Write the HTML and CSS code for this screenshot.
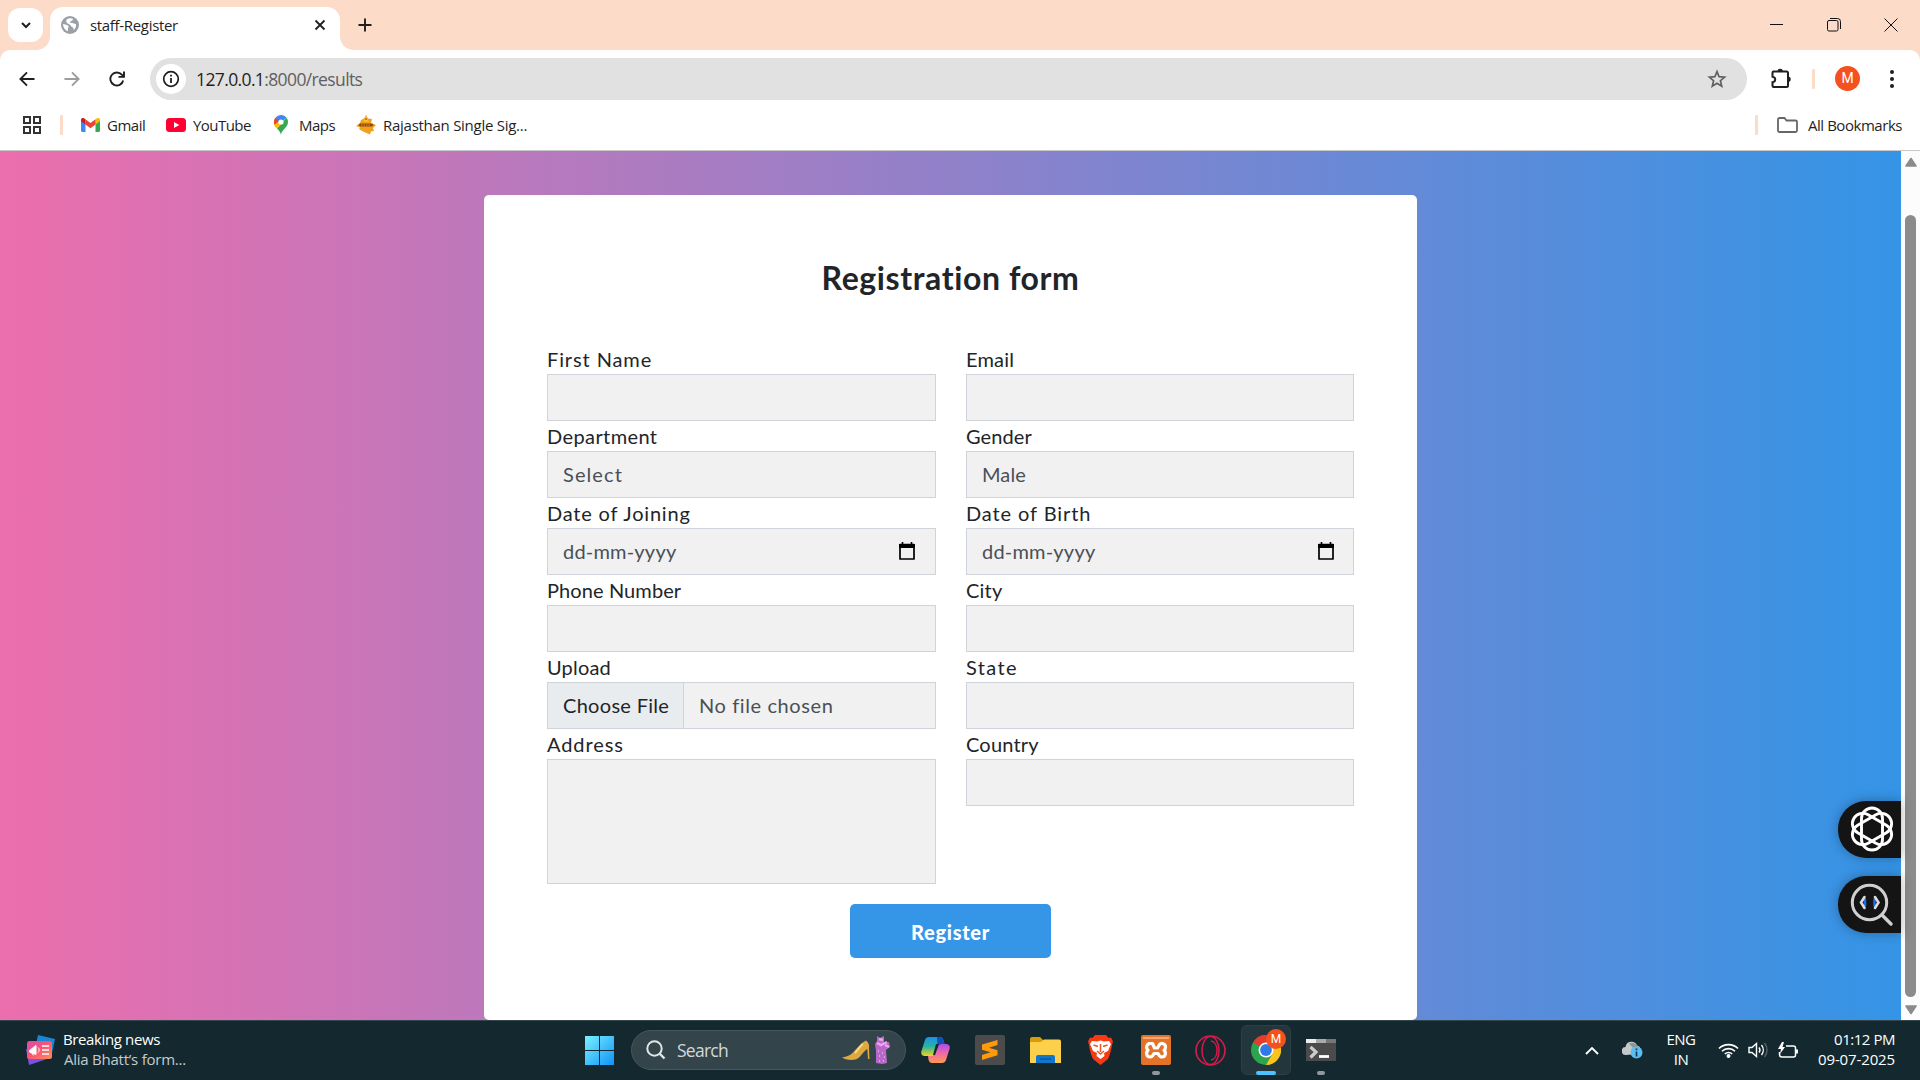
FILE: index.html
```html
<!DOCTYPE html>
<html lang="en">
<head>
<meta charset="utf-8">
<title>staff-Register</title>
<link rel="stylesheet" href="styles.css">
</head>
<body>
<header class="browser">
  <div class="tabstrip">
    <div class="tab-search"><svg width="12" height="8" viewBox="0 0 12 8"><path d="M2 2l4 4 4-4" fill="none" stroke="#1f1f1f" stroke-width="2"/></svg></div>
    <div class="tab">
      <svg class="globe" width="18" height="18" viewBox="0 0 18 18"><circle cx="9" cy="9" r="9" fill="#9aa0a6"/><path d="M2 8c2 .2 3 1 4.500 1.300 1.500.4 1.200 2 .6 2.800-.5.900.3 1.600-.1 3.200C4 14.300 2 11.500 2 8zM5.500 3.500C7.500 2.200 11 2 12 3c.2 1.500-1.800 1.500-2.600 2.500-.7 1 .6 1.700 1.800 1.600 1.500-.1 2.200 1 3.800.8.600 2.500-.8 5-2.400 6 .1-1.500-.2-2.500-1.500-2.900-1.500-.5-1.200-2-2.500-2.600C6.500 7.500 4.500 6.500 5.500 3.500z" fill="#fff"/></svg>
      <span class="tab-title">staff-Register</span>
      <svg width="12" height="12" viewBox="0 0 12 12"><path d="M1.500 1.500l9 9M10.500 1.500l-9 9" stroke="#1f1f1f" stroke-width="1.800"/></svg>
    </div>
    <svg class="new-tab" width="14" height="14" viewBox="0 0 14 14"><path d="M7 .5v13M.5 7h13" stroke="#1f1f1f" stroke-width="1.900"/></svg>
    <div class="window-buttons">
      <svg width="14" height="14" viewBox="0 0 14 14"><path d="M0 6.500h13" stroke="#111" stroke-width="1"/></svg>
      <svg width="14" height="14" viewBox="0 0 14 14" fill="none" stroke="#111"><rect x=".5" y="2.500" width="10.500" height="10.500" rx="1.500"/><path d="M3 .5h7.500a3 3 0 0 1 3 3V11"/></svg>
      <svg width="14" height="14" viewBox="0 0 14 14"><path d="M.5.500l13 13M13.500.500l-13 13" stroke="#111" stroke-width="1"/></svg>
    </div>
  </div>

  <div class="toolbar">
    <div class="nav">
      <svg width="16" height="16" viewBox="0 0 16 16" fill="none" stroke="#1f1f1f" stroke-width="1.900"><path d="M15.500 8H1.500M8 1.300L1.400 8 8 14.700"/></svg>
      <svg width="16" height="16" viewBox="0 0 16 16" fill="none" stroke="#9c9c9c" stroke-width="1.900"><path d="M.5 8h14M8 1.300L14.600 8 8 14.700"/></svg>
      <svg width="16" height="16" viewBox="0 0 16 16" fill="none" stroke="#1f1f1f" stroke-width="1.900"><path d="M14.200 9.500a6.500 6.500 0 1 1-1.400-5.800L14.600 5.500M15 .5v5.400H9.500"/></svg>
    </div>
    <div class="omnibox">
      <span class="site-info"><svg width="18" height="18" viewBox="0 0 18 18"><circle cx="9" cy="9" r="7.300" fill="none" stroke="#1f1f1f" stroke-width="1.700"/><path d="M9 8v5M9 4.800v1.800" stroke="#1f1f1f" stroke-width="1.800"/></svg></span>
      <span class="url">127.0.0.1<span class="url-path">:8000/results</span></span>
      <svg width="20" height="20" viewBox="0 0 20 20"><path d="M10 2.600l2.100 5.100 5.500.4-4.200 3.600 1.300 5.400L10 14.200l-4.700 2.900 1.300-5.400-4.200-3.600 5.500-.4z" fill="none" stroke="#5f6060" stroke-width="1.700"/></svg>
    </div>
    <div class="tools">
      <svg width="22" height="22" viewBox="0 0 22 22"><path d="M3.500 3.500h13a1.500 1.500 0 0 1 1.500 1.500v12.500a1.500 1.500 0 0 1-1.500 1.500h-13a1.500 1.500 0 0 1-1-1.500v-3.300c3.600-.5 3.600-5 0-5.500V5a1.500 1.500 0 0 1 1-1.500z" fill="none" stroke="#1f1f1f" stroke-width="2"/><path d="M7.500 3.500a2.700 2.700 0 0 1 5.400 0zM18 8.500a2.700 2.700 0 0 1 0 5.400z" fill="#1f1f1f"/></svg>
      <i class="divider"></i>
      <span class="avatar">M</span>
      <svg width="6" height="20" viewBox="0 0 6 20" fill="#1f1f1f"><circle cx="3" cy="3" r="2"/><circle cx="3" cy="10" r="2"/><circle cx="3" cy="17" r="2"/></svg>
    </div>
  </div>

  <div class="bookmarks">
    <svg class="apps" width="18" height="18" viewBox="0 0 18 18" fill="none" stroke="#333" stroke-width="2"><path d="M1 1h6v6H1zM11 1h6v6h-6zM1 11h6v6H1zM11 11h6v6h-6z"/></svg>
    <i class="divider"></i>
    <div class="bookmark gmail"><svg width="19" height="14" viewBox="0 0 19 14"><path d="M0 2v10.500A1.500 1.500 0 0 0 1.500 14h3V5z" fill="#4285f4"/><path d="M19 2v10.500a1.500 1.500 0 0 1-1.500 1.500h-3V5z" fill="#34a853"/><path d="M14.500 1.300V6.600L19 3.200V2c0-2-2-2.500-3.300-1.500z" fill="#fbbc04"/><path d="M4.500 1.300v5.300l5 3.700 5-3.700V1.300l-5 3.700z" fill="#ea4335"/><path d="M0 2v1.200l4.500 3.400V1.300L3.300.5C2-.5 0 0 0 2z" fill="#c5221f"/></svg><span>Gmail</span></div>
    <div class="bookmark youtube"><svg width="20" height="14" viewBox="0 0 20 14"><rect width="20" height="14" rx="3.500" fill="#f03"/><path d="M8 4v6l5.300-3z" fill="#fff"/></svg><span>YouTube</span></div>
    <div class="bookmark maps"><svg width="14" height="20" viewBox="0 0 14 20"><path d="M7 20c0-5 7-7.500 7-13A7 7 0 0 0 12.500 2.700L3 13.500C5 15.800 6.500 17 7 20z" fill="#34a853"/><path d="M1.300 3A7 7 0 0 0 3 13.500L9 7z" fill="#fbbc04"/><path d="M1.500 2.700A7 7 0 0 0 .5 9.500L7 5z" fill="#ea4335"/><path d="M1.600 2.600a7 7 0 0 1 10.900 0L6.500 9z" fill="#4285f4"/><circle cx="7" cy="7" r="2.600" fill="#fff"/></svg><span>Maps</span></div>
    <div class="bookmark rajasthan"><svg width="20" height="20" viewBox="0 0 20 20"><path d="M5 5l3-1.500L10 0l2 3.500L16 4l-1 4 5 2-3 3 1 3-3 .5-1 3-3.500-1.500L6 16l-3-2 1-1.500L0 11l4-3z" fill="#f3a01f"/><path d="M10 .5l2.500 6h-5z" fill="#f8c62c"/><path d="M4 8.500h12l1.500 1.500-1.500 1.500H4L2.500 10z" fill="#8a4d16"/><path d="M5 10h10" stroke="#f3a01f" stroke-width=".8" stroke-dasharray="1.500 1"/><path d="M10 3v2" stroke="#7a4316"/></svg><span>Rajasthan Single Sig...</span></div>
    <div class="all-bookmarks"><i class="divider"></i><svg width="21" height="16" viewBox="0 0 21 16"><path d="M1 2.500A1.500 1.500 0 0 1 2.500 1h5l2 2.500h9A1.500 1.500 0 0 1 20 5v8.500a1.500 1.500 0 0 1-1.500 1.500h-16A1.500 1.500 0 0 1 1 13.500z" fill="none" stroke="#666" stroke-width="1.800"/></svg><span>All Bookmarks</span></div>
  </div>
</header>

<div class="viewport">
  <main class="page">
    <form class="card">
      <h1>Registration form</h1>
      <div class="columns">
        <div class="column">
          <label class="sp-9">First Name</label><div class="field"></div>
          <label class="sp-4">Department</label><div class="field"><span class="sp-11">Select</span></div>
          <label class="sp-8">Date of Joining</label><div class="field"><span class="sp-2">dd-mm-yyyy</span><svg width="16" height="18" viewBox="0 0 16 18"><path d="M3.500 0v3M12.500 0v3" stroke="#000" stroke-width="1.600"/><path d="M1 2.500h14v14.500H1z" fill="none" stroke="#000" stroke-width="1.700" stroke-linejoin="round"/><path d="M0 2h16v4H0z"/></svg></div>
          <label class="sp-1">Phone Number</label><div class="field"></div>
          <label class="sp-2">Upload</label><div class="field file"><span class="choose sp-3">Choose File</span><span class="sp-6">No file chosen</span></div>
          <label class="sp-9">Address</label><div class="field area"></div>
        </div>
        <div class="column">
          <label class="sp-2">Email</label><div class="field"></div>
          <label class="sp-1">Gender</label><div class="field"><span class="sp-1">Male</span></div>
          <label class="sp-9">Date of Birth</label><div class="field"><span class="sp-2">dd-mm-yyyy</span><svg width="16" height="18" viewBox="0 0 16 18"><path d="M3.500 0v3M12.500 0v3" stroke="#000" stroke-width="1.600"/><path d="M1 2.500h14v14.500H1z" fill="none" stroke="#000" stroke-width="1.700" stroke-linejoin="round"/><path d="M0 2h16v4H0z"/></svg></div>
          <label class="sp-2">City</label><div class="field"></div>
          <label class="sp-14">State</label><div class="field"></div>
          <label class="sp-2">Country</label><div class="field"></div>
        </div>
      </div>
      <button type="button" class="register">Register</button>
    </form>
    <div class="extension extension-flower"><svg width="46" height="46" viewBox="-23 -23 46 46" fill="none" stroke="#fff" stroke-width="2.900"><rect x="-10.500" y="-21" width="21" height="42" rx="10.500"/><rect x="-10.500" y="-21" width="21" height="42" rx="10.500" transform="rotate(60)"/><rect x="-10.500" y="-21" width="21" height="42" rx="10.500" transform="rotate(120)"/></svg></div>
    <div class="extension extension-inspect"><svg width="46" height="46" viewBox="0 0 46 46" fill="none" stroke-linecap="round"><circle cx="20.500" cy="20.500" r="17.200" stroke="#d0d0d0" stroke-width="3"/><path d="M33 33l9 9" stroke="#d0d0d0" stroke-width="3.400"/><path d="M16 17.500v6M25.500 17.500v6" stroke="#1a6cf5" stroke-width="2.500"/><path d="M15.500 15l-3.500 5.500 3.500 5.500M26 15l3.500 5.500L26 26" stroke="#dcdcdc" stroke-width="2.600"/></svg></div>
  </main>
  <div class="scrollbar">
    <svg width="12" height="10" viewBox="0 0 12 10"><path d="M6 1.500L11 9H1z" fill="#8b8b8b" stroke="#8b8b8b" stroke-width="1.600" stroke-linejoin="round"/></svg>
    <div class="thumb"></div>
    <svg width="12" height="10" viewBox="0 0 12 10"><path d="M6 8.500L11 1H1z" fill="#8b8b8b" stroke="#8b8b8b" stroke-width="1.600" stroke-linejoin="round"/></svg>
  </div>
</div>

<footer class="taskbar">
  <div class="news">
    <svg width="30" height="30" viewBox="0 0 30 30"><defs><linearGradient id="news" x2="1" y2="1"><stop stop-color="#d94bb0"/><stop offset=".5" stop-color="#fb5573"/><stop offset="1" stop-color="#ff9058"/></linearGradient></defs><path d="M13 0l17 4-3 14-17-4z" fill="#1a86d8"/><path d="M1 14l3 16 18-6z" fill="#7c50e8"/><rect x="2" y="6" width="25" height="18" rx="2.500" fill="url(#news)"/><path d="M4.500 15.500L11 10.500v9l-6.500-2.500zM6.500 17.500l2 3" fill="#fff" stroke="#fff"/><path d="M13 12.500c1.500 1 1.500 4 0 5" fill="none" stroke="#fff"/><path d="M17 11h7M17 15h7M17 19h7" stroke="#ffd9dc" stroke-width="1.800"/></svg>
    <div class="news-text"><span class="headline">Breaking news</span><span class="story">Alia Bhatt’s form...</span></div>
  </div>

  <div class="apps-row">
    <svg class="start" width="29" height="29" viewBox="0 0 29 29"><defs><linearGradient id="win" x2="1" y2="1"><stop stop-color="#79f0ff"/><stop offset="1" stop-color="#1093f8"/></linearGradient></defs><path d="M0 0h14v14H0zM15 0h14v14H15zM0 15h14v14H0zM15 15h14v14H15z" fill="url(#win)"/></svg>
    <div class="search">
      <svg width="20" height="20" viewBox="0 0 20 20" fill="none" stroke="#e2e6e7" stroke-width="2"><circle cx="8.500" cy="8.500" r="7.200"/><path d="M13.500 13.500l5 5" stroke-width="2.400"/></svg>
      <span>Search</span>
      <svg class="fashion" width="50" height="30" viewBox="0 0 50 30"><path d="M1 22.500c5-1 8-2 11-5 4-4 7-9 13-12 2.500 2 3.500 4 3 7.500L28.500 24h-1.500l-.7-10c-4 2-6 8-11 10.300-5 1.400-11 .7-14.300-1.800z" fill="#dfa93f"/><path d="M14 18c3-3 5-7 8-9" stroke="#f8dc94" stroke-width="1.800" fill="none"/><path d="M36 1l3 2 4-2v7l5-1 1 5-4 3 1 13-5 1-6-1 0-12-1-7 2-3z" fill="#b768c9"/><path d="M36 8l4 2 6-3M38 4l4 1M44 10l4 2" stroke="#efa4ef" stroke-width="2.500" fill="none"/><path d="M37 16h1M41 18h1M38 21h1M43 22h1M38 26h1M42 26h1" stroke="#e3b5f3" stroke-width="1.500"/></svg>
    </div>
    <svg class="copilot" width="29" height="26" viewBox="0 0 29 26"><defs><linearGradient id="cpa" x2="0" y2="1"><stop stop-color="#1b8ff0"/><stop offset=".5" stop-color="#28b4a0"/><stop offset="1" stop-color="#f3d51c"/></linearGradient><linearGradient id="cpb" x2="0" y2="1"><stop stop-color="#a74df0"/><stop offset=".5" stop-color="#f26aa5"/><stop offset="1" stop-color="#ff9a4a"/></linearGradient></defs><path d="M8 0h11c2 0 3 1.500 3.500 3.500l1 3.500h-4c-2 0-3 1-3.500 3l-2 7c-.5 1.500-1.500 2-3 2H4c-3 0-4.500-2-3.500-5L4 3c.6-2 2-3 4-3z" fill="url(#cpa)"/><path d="M16 0h3c2 0 3 1.500 3.500 3.500l1 3.500h-4c-1.500 0-2.500.5-3 1.500z" fill="#1550b8"/><path d="M21 7h4c3 0 4.500 2 3.500 5l-3.500 11c-.6 2-2 3-4 3H11c-2 0-3-1.500-3.500-3.500L7 19h4c1.500 0 2.500-.5 3-2l2.500-7c.6-2 2-3 4.500-3z" fill="url(#cpb)"/><path d="M15 7h3l-4 11h-2z" fill="#14292f"/></svg>
    <svg class="sublime" width="30" height="30" viewBox="0 0 30 30"><rect width="30" height="30" rx="2" fill="#4b4b4b"/><path d="M7 9.500L22.500 5v5L14 12.700l8.500 2.600v5L7 25v-5l8.500-2.700L7 14.700z" fill="#ff9a0a"/></svg>
    <svg class="folder" width="31" height="26" viewBox="0 0 31 26"><path d="M0 2a2 2 0 0 1 2-2h8l4 4v4H0z" fill="#dd9a07"/><path d="M0 5h11l3-2.500h15a2 2 0 0 1 2 2V26H0z" fill="#fdd04b"/><path d="M6 26v-6a2 2 0 0 1 2-2h15a2 2 0 0 1 2 2v6z" fill="#1077cc"/><path d="M10 22h11" stroke="#0a4f96" stroke-width="1.200"/></svg>
    <svg class="brave" width="25" height="30" viewBox="0 0 25 30"><path d="M7 0h11l2.500 3 2.500-.5 2 4-1 3.500c-1 7-3 12-4 14l-7.500 6L5 24C4 22 2 17 1 10L0 6.500l2-4 2.500.5z" fill="#f63a14"/><path d="M4 6l5 .5 3.500-1 3.500 1 5-.5 2 3-3 7-4 2 .5 3-4 3-4-3 .5-3-4-2-3-7z" fill="#fff"/><path d="M5.500 10l4.500 1.500M19.500 10L15 11.500M12.500 9v8M9 16l3.500 3 3.500-3" stroke="#f4501e" stroke-width="1.500" fill="none"/></svg>
    <div class="app xampp open"><svg width="30" height="30" viewBox="0 0 30 30"><rect width="30" height="30" rx="2" fill="#e37328"/><path d="M2 2h26v2H2z" fill="#f4a775"/><path d="M8 8.500h3.500l2 4.500h3l2-3.500c2-2 6-1 6 2.500 0 1.500-.5 2.500-1.500 3.200 2.500 2 1.500 6.800-2 6.800-2.500 0-3-2-4-3.500h-4c-1 2-2 3.500-4 3.500-3.500 0-4.500-4.500-2-6.800-2-1.500-2-5 1-6.700z" fill="none" stroke="#fff" stroke-width="3.200" stroke-linejoin="round"/></svg></div>
    <svg class="opera" width="31" height="31" viewBox="0 0 31 31" fill="none" stroke="#d31b4a"><circle cx="15.500" cy="15.500" r="14.500" stroke-width="1.700"/><ellipse cx="15.500" cy="15.500" rx="8.500" ry="14" stroke-width="1.500"/><path d="M16 6c8 1 8 18 0 19" stroke-width="1.500"/></svg>
    <div class="app chrome active">
      <svg width="30" height="30" viewBox="0 0 30 30"><circle cx="15" cy="15" r="15" fill="#2da44e"/><path d="M15 15L2 7.500A15 15 0 0 1 28 7.500H15z" fill="#e33b2e"/><path d="M28 7.500A15 15 0 0 1 15 30l6.500-11.300L15 7.500z" fill="#fcc31e"/><circle cx="15" cy="15" r="7.500" fill="#fff"/><circle cx="15" cy="15" r="5.900" fill="#3279e8"/></svg>
      <span class="badge">M</span>
    </div>
    <div class="app terminal open"><svg width="30" height="22" viewBox="0 0 30 22"><path d="M0 0h30v22H0z" fill="#4b4b4b"/><path d="M0 0h10v4H0z" fill="#ededed"/><path d="M10 0h10v4H10z" fill="#aaa"/><path d="M20 0h10v4H20z" fill="#777"/><path d="M4.500 8l5.500 5-5.500 5.500" fill="none" stroke="#ccc" stroke-width="3.200"/><path d="M13 17.500h10" stroke="#fff" stroke-width="2.800"/></svg></div>
  </div>

  <div class="tray">
    <svg width="14" height="9" viewBox="0 0 14 9"><path d="M1 8l6-6 6 6" fill="none" stroke="#fff" stroke-width="1.900"/></svg>
    <svg class="cloud" width="21" height="18" viewBox="0 0 21 18"><path d="M4 14a4 4 0 0 1-.5-8A6 6 0 0 1 15 4.500 4.500 4.500 0 0 1 16 13z" fill="#c4c8c9"/><path d="M7 2.500A6 6 0 0 1 15 4.500a4.500 4.500 0 0 1 1 8z" fill="#8d9597"/><circle cx="14.500" cy="11.500" r="6" fill="#5bbcf2"/><path d="M14.500 10.500v5M14.500 7.500v1.800" stroke="#10384b" stroke-width="1.600"/></svg>
    <div class="language"><span>ENG</span><span>IN</span></div>
    <svg class="wifi" width="21" height="16" viewBox="0 0 21 16" fill="none" stroke="#fff" stroke-width="1.600"><path d="M1 6.500a13.500 13.500 0 0 1 19 0M4 9.300a9.300 9.300 0 0 1 13 0M6.800 12a5.300 5.300 0 0 1 7.400 0"/><circle cx="10.500" cy="14" r="1.200" fill="#fff"/></svg>
    <svg class="sound" width="20" height="16" viewBox="0 0 20 16" fill="none" stroke="#fff" stroke-width="1.400"><path d="M1 5.500h3L8.500 1.500v13L4 10.500H1z"/><path d="M11 5.500a4 4 0 0 1 0 5M13.500 3a8 8 0 0 1 0 10"/><path d="M16.500 1a11 11 0 0 1 0 14" stroke="#546266"/></svg>
    <svg class="battery" width="21" height="17" viewBox="0 0 21 17"><path d="M8 4h7.500A2 2 0 0 1 17.500 6v7a2 2 0 0 1-2 2H4a2.500 2.500 0 0 1-2.500-2.500V10" fill="none" stroke="#fff" stroke-width="1.500"/><path d="M19 7.500v4" stroke="#fff" stroke-width="2"/><path d="M4 0L0 7h3l-1 5 5-7H4.500L6 0z" fill="#fff"/></svg>
    <div class="clock"><span class="time">01:12 PM</span><span class="date">09-07-2025</span></div>
  </div>
</footer>
</body>
</html>
```
FILE: styles.css
```css
* { box-sizing: border-box; }

body {
  margin: 0;
  width: 1920px;
  height: 1080px;
  overflow: hidden;
  display: flex;
  flex-direction: column;
  background: #fddbc9;
  font-family: "Segoe UI", "Open Sans", sans-serif;
  font-size: 15px;
  color: #1f1f1f;
}

svg { display: block; flex: none; }
span { white-space: nowrap; }

/* Browser frame */
.tabstrip {
  height: 50px;
  display: flex;
  align-items: center;
  padding-left: 8px;
}
.tab-search {
  width: 35px;
  height: 34px;
  border-radius: 12px;
  background: #fff;
  display: flex;
  align-items: center;
  justify-content: center;
}
.tab {
  position: relative;
  align-self: flex-end;
  width: 290px;
  height: 43px;
  margin-left: 7px;
  padding: 0 14px 7px 11px;
  border-radius: 13px 13px 0 0;
  background: #fff;
  display: flex;
  align-items: center;
}
.tab::before,
.tab::after {
  content: "";
  position: absolute;
  bottom: 0;
  width: 13px;
  height: 13px;
}
.tab::before { left: -13px; background: radial-gradient(circle at 0 0, transparent 12.5px, #fff 13px); }
.tab::after { right: -13px; background: radial-gradient(circle at 100% 0, transparent 12.5px, #fff 13px); }
.tab-title { margin-left: 11px; padding-bottom: 1px; flex: 1; letter-spacing: -.32px; }
.new-tab { margin-left: 18px; }
.window-buttons { margin-left: auto; margin-right: 22px; padding-bottom: 1px; display: flex; gap: 43px; }

.toolbar {
  height: 58px;
  padding: 0 25px 1px 19px;
  background: #fff;
  border-radius: 10px 10px 0 0;
  display: flex;
  align-items: center;
}
.nav { display: flex; gap: 29px; }
.omnibox {
  width: 1597px;
  height: 42px;
  margin: 1px 0 0 25px;
  padding: 0 20px 0 6px;
  border-radius: 21px;
  background: #e1e1e1;
  display: flex;
  align-items: center;
}
.site-info {
  width: 30px;
  height: 30px;
  border-radius: 50%;
  background: #fff;
  display: flex;
  align-items: center;
  justify-content: center;
}
.url { flex: 1; margin-left: 10px; font-size: 17.5px; letter-spacing: -.62px; }
.url-path { color: #5f6060; }
.tools { margin-left: auto; display: flex; align-items: center; }
.divider { display: block; width: 3px; height: 20px; border-radius: 1px; background: #fddbc9; }
.tools .divider { margin-left: 20px; }
.avatar {
  width: 25px;
  height: 25px;
  margin: 0 29px 0 20px;
  border-radius: 50%;
  background: #f4511e;
  color: #fff;
  font: 14px/25px Roboto, sans-serif;
  text-align: center;
}

.bookmarks {
  height: 43px;
  padding: 0 18px 8px 23px;
  background: #fff;
  border-bottom: 1px solid #c8c8c8;
  display: flex;
  align-items: center;
}
.bookmarks span { padding-bottom: 1px; }
.apps + .divider { margin: 0 18px 0 19px; }
.bookmark { display: flex; align-items: center; gap: 7px; margin-right: 20px; letter-spacing: -.5px; }
.gmail { width: 65px; }
.youtube { width: 88px; margin-right: 20px; letter-spacing: -.55px; }
.maps { width: 62px; gap: 11px; }
.rajasthan { letter-spacing: -.27px; }
.all-bookmarks { margin-left: auto; display: flex; align-items: center; letter-spacing: -.46px; }
.all-bookmarks svg { margin: 0 10px 0 19px; }

/* Page */
.viewport { height: 869px; display: flex; }
.page {
  position: relative;
  width: 1901px;
  background: linear-gradient(to right, #ec6ead, #3494e6);
  display: flex;
  justify-content: center;
  align-items: flex-end;
}
.card {
  width: 933px;
  height: 825px;
  padding: 63px 63px 0;
  border-radius: 5px;
  background: #fff;
  color: #212529;
  font-family: "Comic Sans MS", Lato, sans-serif;
  font-size: 20px;
  display: flex;
  flex-direction: column;
}
h1 {
  margin: 0;
  height: 86px;
  font-size: 32px;
  line-height: 40px;
  letter-spacing: .6px;
  text-align: center;
}
.columns { display: grid; grid-template-columns: 389px 388px; gap: 30px; }
.column { display: flex; flex-direction: column; }
label { height: 30px; line-height: 30px; white-space: nowrap; }
.field {
  height: 47px;
  padding: 0 20px 0 15px;
  border: 1px solid #ced4da;
  background: #f1f1f1;
  color: #495057;
  display: flex;
  align-items: center;
  justify-content: space-between;
}
.field span { padding-bottom: 1px; }
.column + .column .field { padding-right: 19px; }
.field svg { margin-bottom: 2px; }
.area { height: 125px; }
.file { padding-left: 0; justify-content: flex-start; gap: 15px; }
.field .choose {
  width: 136px;
  height: 45px;
  padding: 0 0 0 15px;
  line-height: 44px;
  border-right: 1px solid #ced4da;
  background: #e9ecef;
  color: #212529;
}
.register {
  width: 201px;
  height: 54px;
  margin: 20px auto 0;
  padding: 2px 0 0;
  border: 0;
  border-radius: 5px;
  background: #3595e7;
  color: #fff;
  font: 900 20px "Comic Sans MS", Lato, sans-serif;
  letter-spacing: .7px;
}

/* Letter spacing steps, in tenths of a pixel */
.sp-1 { letter-spacing: .1px; }
.sp-2 { letter-spacing: .2px; }
.sp-3 { letter-spacing: .3px; }
.sp-4 { letter-spacing: .4px; }
.sp-6 { letter-spacing: .6px; }
.sp-8 { letter-spacing: .8px; }
.sp-9 { letter-spacing: .9px; }
.sp-11 { letter-spacing: 1.1px; }
.sp-14 { letter-spacing: 1.4px; }

.extension {
  position: absolute;
  right: 0;
  width: 63px;
  height: 57px;
  padding: 5px 0 0 11px;
  border-radius: 28px 0 0 28px;
  background: #141414;
  box-shadow: 0 0 12px rgba(0, 0, 0, .3);
}
.extension-flower { top: 650px; }
.extension-inspect { top: 725px; padding-top: 6px; }

.scrollbar {
  width: 19px;
  padding: 6px 0 5px 4px;
  background: #fcfcfc;
  display: flex;
  flex-direction: column;
}
.thumb { width: 11px; height: 782px; margin: 48px 0 8px; border-radius: 6px; background: #8b8b8b; }

/* Taskbar */
.taskbar {
  height: 60px;
  padding-bottom: 1px;
  border-top: 1px solid #34464b;
  background: #14292f;
  color: #fff;
  display: flex;
  align-items: center;
  line-height: 20px;
}
.news { width: 585px; padding-left: 25px; display: flex; align-items: center; gap: 8px; }
.news-text { display: flex; flex-direction: column; padding-bottom: 2px; }
.headline { letter-spacing: -.38px; }
.story { color: #c5cbcd; letter-spacing: -.24px; padding-left: 1px; }
.apps-row { display: flex; align-items: center; height: 100%; }
.search {
  width: 275px;
  height: 40px;
  margin-left: 17px;
  padding: 0 14px 0 14px;
  border: 1px solid #46575c;
  border-radius: 20px;
  background: #33454b;
  color: #d3d8da;
  font-size: 17.5px;
  letter-spacing: -.74px;
  display: flex;
  align-items: center;
  gap: 11px;
}
.fashion { margin-left: auto; }
.copilot { margin-left: 15px; }
.sublime { margin-left: 25px; }
.folder { margin-left: 25px; }
.brave { margin-left: 27px; }
.app {
  position: relative;
  width: 50px;
  height: 50px;
  border-radius: 6px;
  display: flex;
  align-items: center;
  justify-content: center;
}
.app::after {
  content: "";
  position: absolute;
  bottom: 0;
  left: 21px;
  width: 8px;
  height: 4px;
  border-radius: 2px;
  background: #91999c;
}
.xampp { margin-left: 18px; }
.opera { margin-left: 14px; }
.chrome { margin-left: 15px; border: 1px solid #2d4046; background: #23363c; }
.active::after { left: 14px; bottom: -1px; width: 20px; background: #4cc2ff; }
.badge {
  position: absolute;
  top: 3px;
  right: 4px;
  width: 20px;
  height: 20px;
  border-radius: 50%;
  background: #f4511e;
  color: #fff;
  font: 12px/20px Roboto, sans-serif;
  text-align: center;
}
.terminal { margin-left: 5px; }
.tray { margin-left: auto; margin-right: 25px; display: flex; align-items: center; }
.cloud { margin-left: 23px; }
.language { width: 30px; margin-left: 23px; padding-bottom: 2px; display: flex; flex-direction: column; align-items: center; letter-spacing: -.5px; }
.wifi { margin-left: 22px; }
.sound { margin-left: 9px; }
.battery { margin-left: 10px; }
.clock { width: 78px; margin-left: 18px; padding-bottom: 2px; display: flex; flex-direction: column; align-items: flex-end; }
.time { letter-spacing: -.46px; }
.date { letter-spacing: -.13px; }
```
